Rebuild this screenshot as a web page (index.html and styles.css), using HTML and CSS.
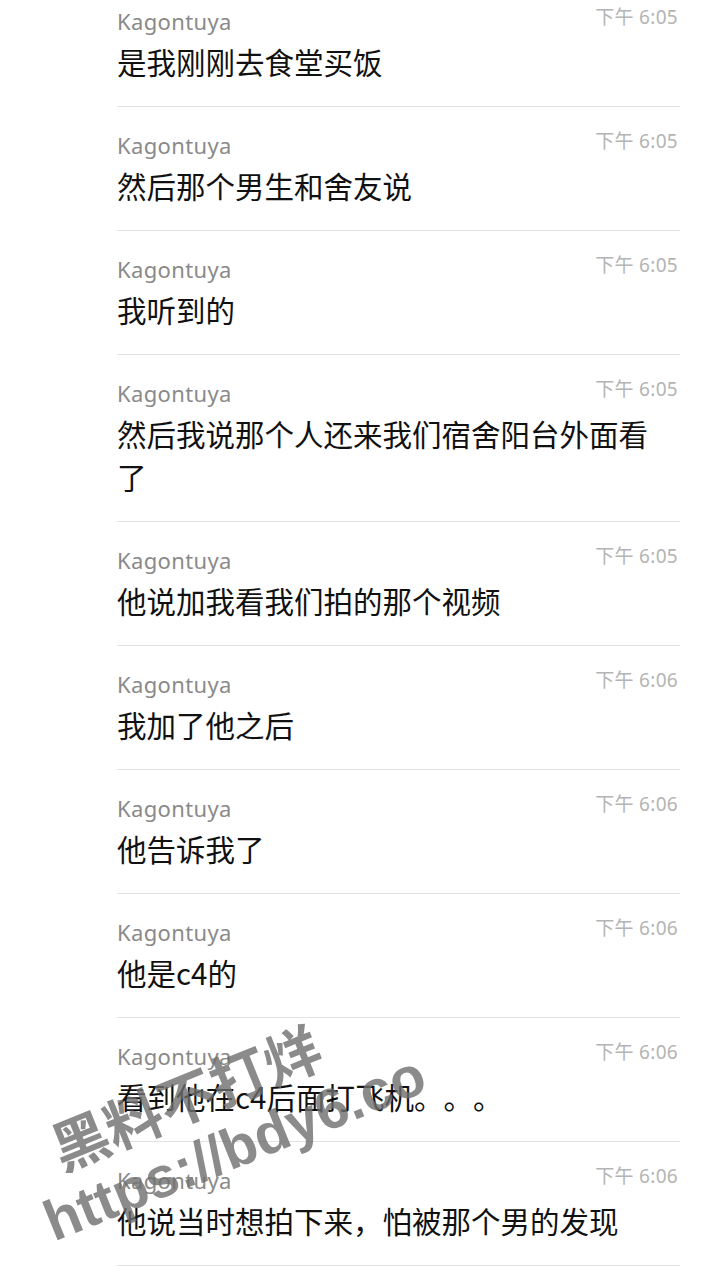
FILE: index.html
```html
<!DOCTYPE html>
<html lang="zh-CN">
<head>
  <meta charset="UTF-8">
  <meta name="viewport" content="width=device-width, initial-scale=1">
  <title>聊天记录</title>
  <link rel="stylesheet" href="styles.css">
</head>

<body>

<div class="page">

  <!-- Chat history -->
  <ul class="list">
    <li class="msg">
      <div class="head"><span class="name">Kagontuya</span><span class="time">下午 6:05</span></div>
      <p class="text">是我刚刚去食堂买饭</p>
    </li>
    <li class="msg">
      <div class="head"><span class="name">Kagontuya</span><span class="time">下午 6:05</span></div>
      <p class="text">然后那个男生和舍友说</p>
    </li>
    <li class="msg">
      <div class="head"><span class="name">Kagontuya</span><span class="time">下午 6:05</span></div>
      <p class="text">我听到的</p>
    </li>
    <li class="msg">
      <div class="head"><span class="name">Kagontuya</span><span class="time">下午 6:05</span></div>
      <p class="text">然后我说那个人还来我们宿舍阳台外面看了</p>
    </li>
    <li class="msg">
      <div class="head"><span class="name">Kagontuya</span><span class="time">下午 6:05</span></div>
      <p class="text">他说加我看我们拍的那个视频</p>
    </li>
    <li class="msg">
      <div class="head"><span class="name">Kagontuya</span><span class="time">下午 6:06</span></div>
      <p class="text">我加了他之后</p>
    </li>
    <li class="msg">
      <div class="head"><span class="name">Kagontuya</span><span class="time">下午 6:06</span></div>
      <p class="text">他告诉我了</p>
    </li>
    <li class="msg">
      <div class="head"><span class="name">Kagontuya</span><span class="time">下午 6:06</span></div>
      <p class="text">他是c4的</p>
    </li>
    <li class="msg">
      <div class="head"><span class="name">Kagontuya</span><span class="time">下午 6:06</span></div>
      <p class="text">看到他在c4后面打飞机。。。</p>
    </li>
    <li class="msg">
      <div class="head"><span class="name">Kagontuya</span><span class="time">下午 6:06</span></div>
      <p class="text">他说当时想拍下来，怕被那个男的发现</p>
    </li>
  </ul>

  <!-- Watermark -->
  <div class="watermark">
    <div class="wm-line">黑料不打烊</div>
    <div class="wm-line">https://bdy6.co</div>
  </div>

</div>

</body>
</html>
```

FILE: styles.css
```css
* {
  box-sizing: border-box;
  padding: 0;
  margin: 0;
}

body {
  font-family: "Noto Sans", "Noto Sans CJK SC", sans-serif;
  background: #fff;
  width: 709px;
  height: 1280px;
  overflow: hidden;
}

.page {
  position: relative;
  height: 1280px;
}

/* Chat history */
.list {
  list-style: none;
  margin: -17px 29px 0 117px;
}

.msg {
  padding: 24px 0 23px;
  border-bottom: 1px solid #e2e2e2;
}

.head {
  display: flex;
  justify-content: space-between;
  align-items: flex-start;
  height: 28px;
  margin-bottom: 5px;
}

.name {
  font-size: 22px;
  line-height: 28px;
  color: #8a8a8a;
  letter-spacing: 0.35px;
}

.time {
  font-size: 19px;
  line-height: 20px;
  color: #b4b4b4;
  margin-top: 0;
  margin-right: 2px;
  letter-spacing: 0.3px;
}

.text {
  font-family: "Noto Sans CJK SC", sans-serif;
  font-size: 29.5px;
  line-height: 43px;
  color: #111;
  padding-right: 28px;
  text-spacing-trim: space-all;
}

/* Watermark */
.watermark {
  position: absolute;
  left: 58px;
  top: 1145px;
  transform: rotate(-22deg);
  transform-origin: left bottom;
  pointer-events: none;
}

.wm-line {
  font-family: "Liberation Sans", "Noto Sans CJK SC", sans-serif;
  font-weight: bold;
  font-size: 57px;
  line-height: 62px;
  color: rgba(110, 110, 110, 0.8);
  white-space: nowrap;
}

.wm-line:first-child {
  margin-left: 34px;
}
```
